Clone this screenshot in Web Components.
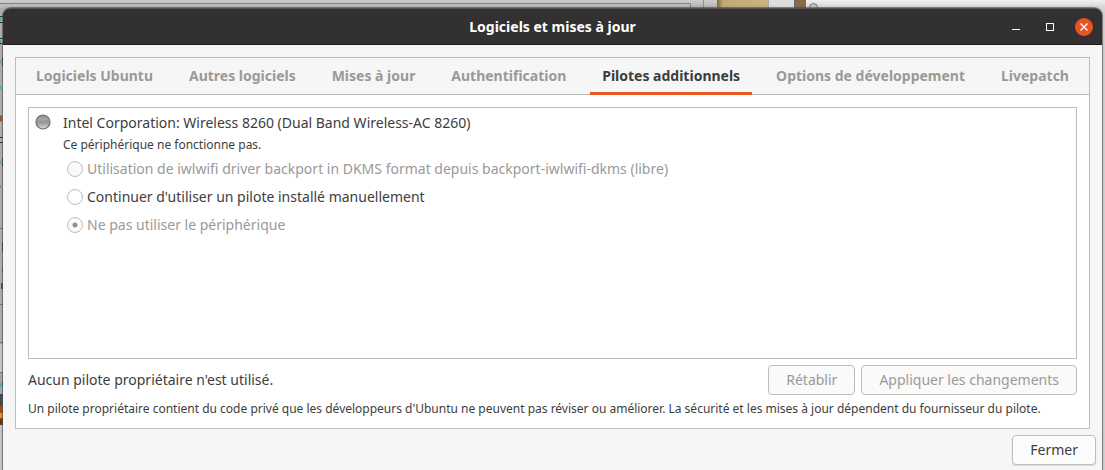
<!DOCTYPE html>
<html lang="fr">
<head>
<meta charset="utf-8">
<title>Logiciels et mises à jour</title>
<style>
  html {
    height: 100%;
  }
  body {
    margin: 0;
    min-height: 100%;
    display: grid;
    font: 15px/20px "Noto Sans", sans-serif;
    color: #3d3d3d;
    --border: #bfbdbc;
    --muted: #9a9998;
    --accent: #e95420;
    --surface: #f6f6f6;
  }
</style>
</head>
<body>
  <desktop-view>
    <app-window heading="Logiciels et mises à jour">
      <tab-panel tabs="Logiciels Ubuntu|Autres logiciels|Mises à jour|Authentification|Pilotes additionnels|Options de développement|Livepatch" active="4">
        <driver-list>
          <driver-device name="Intel Corporation: Wireless 8260 (Dual Band Wireless-AC 8260)" status="Ce périphérique ne fonctionne pas.">
            <driver-option label="Utilisation de iwlwifi driver backport in DKMS format depuis backport-iwlwifi-dkms (libre)" disabled></driver-option>
            <driver-option label="Continuer d'utiliser un pilote installé manuellement"></driver-option>
            <driver-option label="Ne pas utiliser le périphérique" disabled checked></driver-option>
          </driver-device>
        </driver-list>
        <driver-footer>
          Aucun pilote propriétaire n'est utilisé.
          <push-button slot="actions" disabled>Rétablir</push-button>
          <push-button slot="actions" disabled>Appliquer les changements</push-button>
          <span slot="note">Un pilote propriétaire contient du code privé que les développeurs d'Ubuntu ne peuvent pas réviser ou améliorer. La sécurité et les mises à jour dépendent du fournisseur du pilote.</span>
        </driver-footer>
      </tab-panel>
      <push-button slot="actions">Fermer</push-button>
    </app-window>
  </desktop-view>

<script>
// the desktop with the edges of the windows that lie behind
class DesktopView extends HTMLElement {
  constructor() {
    super();
    this.shadowDOM = this.attachShadow({ mode: "open" });
  }

  connectedCallback() {
    this.shadowDOM.innerHTML = `
        <style>
          :host {
            display: grid;
            position: relative;
            box-sizing: border-box;
            padding: 8px 3px 0;
            overflow: hidden;
            background: linear-gradient(90deg, #b0b0b0 50%, #d2d2d2 50%);
          }
          svg {
            position: absolute;
            top: 0;
            left: 0;
          }
          ::slotted(*) {
            position: relative;
          }
        </style>

        <svg width="100%" height="100%" aria-hidden="true">
          <defs>
            <linearGradient id="grey" x2="0" y2="1">
              <stop offset="0" stop-color="#cdcdcd"/>
              <stop offset="1" stop-color="#b4b4b4"/>
            </linearGradient>
            <linearGradient id="light" x2="0" y2="1">
              <stop offset="0" stop-color="#f0f0f0"/>
              <stop offset="1" stop-color="#d4d4d4"/>
            </linearGradient>
            <linearGradient id="wood">
              <stop offset="0" stop-color="#7d6a45"/>
              <stop offset="0.12" stop-color="#c3a977"/>
              <stop offset="1" stop-color="#ccb27f"/>
            </linearGradient>
          </defs>
          <rect width="718" height="8" fill="url(#grey)"/>
          <path d="M0 3.5H690.5V8" fill="none" stroke="#818181"/>
          <path d="M703.5 0V8" stroke="#909090"/>
          <rect x="717" width="51" height="8" fill="url(#wood)"/>
          <rect x="768" width="26" height="8" fill="#dedede"/>
          <path d="M768.5 0V8" stroke="#9bb0b5"/>
          <rect x="794" width="12" height="8" fill="#87694a"/>
          <path d="M794.5 0V8" stroke="#666"/>
          <rect x="806" width="100%" height="8" fill="url(#light)"/>
          <circle cx="813.5" cy="7.5" r="4" fill="#c4c4c4" stroke="#777"/>
          <rect y="344" width="3" height="28" fill="#c9c9c9"/>
          <rect y="372" width="3" height="22" fill="#a8a8a8"/>
          <rect y="394" width="3" height="12" fill="#464b50"/>
          <rect y="406" width="3" height="13" fill="#a64a16"/>
          <rect y="413" width="3" height="5" fill="#ef921b"/>
          <rect y="419" width="3" height="6" fill="#643719"/>
          <rect y="425" width="3" height="45" fill="#c8c8c8"/>
          <path d="M0 16.5H3M0 22.5H3M0 38.5H3M0 43.5H3M0 137.5H3M0 142.5H3" stroke="#303030"/>
          <path d="M0 228.5H3M0 304.5H3M0 342.5H3M0 372.5H3" stroke="#777"/>
          <path d="M0 19.5H1M0 41.5H1M0 62H1M0 87.5H1M0 162H1M0 186.5H1M0 385H1" stroke="#4c9cb5" stroke-width="3"/>
          <path d="M2 62H3M2 162H3M2 247H3" stroke="#40202d" stroke-width="9"/>
          <path d="M0 118.5H2M2 270H3" stroke="#9c5434" stroke-width="6"/>
          <path d="M1 286H3M2 384H3" stroke="#42527d" stroke-width="6"/>
        </svg>
        <slot></slot>
      `;
  }
}

class AppWindow extends HTMLElement {
  constructor() {
    super();
    this.shadowDOM = this.attachShadow({ mode: "open" });
  }

  connectedCallback() {
    this.shadowDOM.innerHTML = `
        <style>
          :host {
            display: flex;
            flex-direction: column;
            min-width: 0;
            background: var(--surface);
            border-radius: 8px 8px 0 0;
            box-shadow: 0 0 0 1px rgba(80, 80, 80, 0.6), 0 0 3px rgba(0, 0, 0, 0.3);
          }
          header {
            display: grid;
            grid-template-columns: 1fr auto 1fr;
            align-items: center;
            box-sizing: border-box;
            height: 37px;
            padding: 0 9px;
            border-top: 1px solid #555352;
            border-bottom: 1px solid #1d1c1c;
            border-radius: 7px 7px 0 0;
            background: #323030;
            color: #fff;
          }
          h1 {
            grid-column: 2;
            margin: 0;
            font-size: 14px;
            line-height: 20px;
            font-weight: 700;
          }
          nav {
            display: flex;
            justify-content: flex-end;
            gap: 16px;
          }
          nav button {
            display: block;
            padding: 0;
            border: 0;
            background: none;
          }
          svg {
            display: block;
          }
          main {
            flex: 1;
            display: flex;
            padding: 12px 12px 6px;
          }
          ::slotted(tab-panel) {
            flex: 1;
          }
          footer {
            display: flex;
            justify-content: flex-end;
            padding: 0 6px 5px;
          }
        </style>

        <header>
          <h1>${this.getAttribute("heading")}</h1>
          <nav>
            <button type="button" aria-label="Réduire">
              <svg width="18" height="18"><path d="M5 11.5H13" stroke="#fff"/></svg>
            </button>
            <button type="button" aria-label="Agrandir">
              <svg width="18" height="18"><rect x="5.5" y="5.5" width="7" height="7" fill="none" stroke="#fff"/></svg>
            </button>
            <button type="button" aria-label="Fermer la fenêtre">
              <svg width="18" height="18">
                <circle cx="9" cy="9" r="9" fill="#e95420"/>
                <path d="M5.5 5.5L12.5 12.5M12.5 5.5L5.5 12.5" stroke="#fff" stroke-width="1.4"/>
              </svg>
            </button>
          </nav>
        </header>
        <main><slot></slot></main>
        <footer><slot name="actions"></slot></footer>
      `;
  }
}

class TabPanel extends HTMLElement {
  constructor() {
    super();
    this.shadowDOM = this.attachShadow({ mode: "open" });
  }

  connectedCallback() {
    this.render();
  }

  render() {
    const active = Number(this.getAttribute("active"));
    const tabs = this.getAttribute("tabs").split("|");

    this.shadowDOM.innerHTML = `
        <style>
          :host {
            display: flex;
            flex-direction: column;
            border: 1px solid var(--border);
            background: #fff;
          }
          .tabs {
            display: flex;
            justify-content: space-between;
            padding: 0 8px;
            background: var(--surface);
            box-shadow: inset 0 -1px var(--border);
          }
          .tabs button {
            height: 37px;
            padding: 0 12px 2px;
            border: 0;
            background: none;
            color: var(--muted);
            font: inherit;
            font-size: 14px;
            font-weight: 700;
            white-space: nowrap;
          }
          .tabs button[aria-selected="true"] {
            color: #3d3d3d;
            box-shadow: inset 0 -3px var(--accent);
          }
          .page {
            flex: 1;
            display: flex;
            flex-direction: column;
            gap: 6px;
            padding: 12px 12px 10px;
          }
          ::slotted(driver-list) {
            flex: 1;
          }
        </style>

        <div class="tabs" role="tablist">
          ${tabs.map((tab, i) => `<button type="button" role="tab" aria-selected="${i === active}">${tab}</button>`).join("")}
        </div>
        <div class="page" role="tabpanel"><slot></slot></div>
      `;
  }
}

class DriverList extends HTMLElement {
  constructor() {
    super();
    this.shadowDOM = this.attachShadow({ mode: "open" });
  }

  connectedCallback() {
    this.shadowDOM.innerHTML = `
        <style>
          :host {
            display: block;
            padding: 5px 6px;
            border: 1px solid var(--border);
            background: #fff;
          }
        </style>
        <slot></slot>
      `;
  }
}

class DriverDevice extends HTMLElement {
  constructor() {
    super();
    this.shadowDOM = this.attachShadow({ mode: "open" });
  }

  connectedCallback() {
    this.shadowDOM.innerHTML = `
        <style>
          :host {
            display: grid;
            grid-template-columns: 16px 1fr;
            column-gap: 12px;
          }
          h2, p {
            margin: 0;
            font-weight: 400;
          }
          h2 {
            font-size: 14px;
            line-height: 20px;
          }
          p {
            font-size: 12px;
            line-height: 24px;
          }
          .options {
            padding-left: 4px;
            margin-top: -2px;
          }
          .text {
            grid-column: 2;
          }
        </style>

        <svg width="16" height="18" aria-hidden="true">
          <defs>
            <linearGradient id="led" x2="0" y2="1">
              <stop offset="0" stop-color="#8a8a8a"/>
              <stop offset="0.3" stop-color="#a6a6a6"/>
              <stop offset="0.5" stop-color="#929292"/>
              <stop offset="1" stop-color="#dadada"/>
            </linearGradient>
          </defs>
          <circle cx="8" cy="9" r="7" fill="url(#led)" stroke="#6e6e6e" stroke-width="1.2"/>
        </svg>
        <h2>${this.getAttribute("name")}</h2>
        <div class="text">
          <p>${this.getAttribute("status")}</p>
          <div class="options"><slot></slot></div>
        </div>
      `;
  }
}

class DriverOption extends HTMLElement {
  constructor() {
    super();
    this.shadowDOM = this.attachShadow({ mode: "open" });
  }

  connectedCallback() {
    const disabled = this.hasAttribute("disabled") ? "disabled" : "";
    const checked = this.hasAttribute("checked") ? "checked" : "";

    this.shadowDOM.innerHTML = `
        <style>
          :host {
            display: block;
            font-size: 14px;
          }
          :host([disabled]) {
            color: var(--muted);
          }
          label {
            display: flex;
            align-items: center;
            gap: 4px;
            height: 28px;
          }
          input {
            appearance: none;
            box-sizing: border-box;
            flex: none;
            width: 16px;
            height: 16px;
            margin: 0;
            border: 1px solid var(--border);
            border-radius: 50%;
            background: #fff;
          }
          input:disabled {
            background: #fafafa;
          }
          input:checked {
            background: radial-gradient(circle, #929191 2px, #fafafa 3px);
          }
        </style>
        <label><input type="radio" name="driver" ${checked} ${disabled}>${this.getAttribute("label")}</label>
      `;
  }
}

class DriverFooter extends HTMLElement {
  constructor() {
    super();
    this.shadowDOM = this.attachShadow({ mode: "open" });
  }

  connectedCallback() {
    this.shadowDOM.innerHTML = `
        <style>
          :host {
            display: block;
            font-size: 14px;
          }
          .row {
            display: flex;
            align-items: center;
            gap: 6px;
          }
          .state {
            flex: 1;
          }
          .note {
            padding-top: 5px;
            font-size: 12px;
            line-height: 18px;
          }
        </style>

        <div class="row">
          <div class="state"><slot></slot></div>
          <slot name="actions"></slot>
        </div>
        <div class="note"><slot name="note"></slot></div>
      `;
  }
}

class PushButton extends HTMLElement {
  constructor() {
    super();
    this.shadowDOM = this.attachShadow({ mode: "open" });
  }

  connectedCallback() {
    const disabled = this.hasAttribute("disabled") ? "disabled" : "";

    this.shadowDOM.innerHTML = `
        <style>
          :host {
            display: block;
          }
          button {
            box-sizing: border-box;
            height: 30px;
            padding: 0 17px;
            border: 1px solid var(--border);
            border-radius: 4px;
            background: #fcfcfc;
            color: #3d3d3d;
            font: inherit;
            font-size: 14px;
            box-shadow: 0 1px 1px rgba(0, 0, 0, 0.12);
          }
          button:disabled {
            background: #fafafa;
            color: var(--muted);
            box-shadow: none;
          }
        </style>
        <button type="button" ${disabled}><slot></slot></button>
      `;
  }
}

customElements.define("desktop-view", DesktopView);
customElements.define("app-window", AppWindow);
customElements.define("tab-panel", TabPanel);
customElements.define("driver-list", DriverList);
customElements.define("driver-device", DriverDevice);
customElements.define("driver-option", DriverOption);
customElements.define("driver-footer", DriverFooter);
customElements.define("push-button", PushButton);
</script>
</body>
</html>
